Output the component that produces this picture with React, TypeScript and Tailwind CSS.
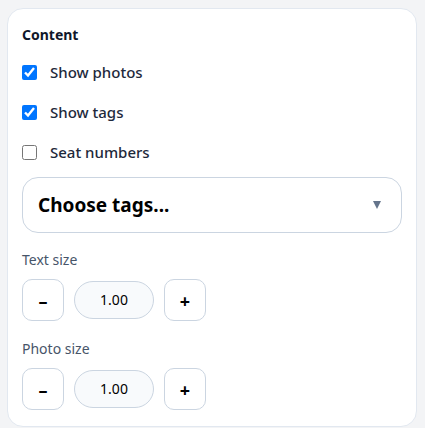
import { useState } from 'react'

const TOGGLES = [
  { id: 'photos', label: 'Show photos', initial: true },
  { id: 'tags', label: 'Show tags', initial: true },
  { id: 'seats', label: 'Seat numbers', initial: false },
] as const

function Stepper({ label, value }: { label: string; value: number }) {
  const [v, setV] = useState(value)
  return (
    <div className="flex flex-col gap-[9px]">
      <span className="text-sm leading-5 text-[#475569]">{label}</span>
      <div className="flex items-center gap-[10px]">
        <button
          type="button"
          onClick={() => setV((x) => Math.max(0.1, +(x - 0.1).toFixed(2)))}
          className="flex h-[42px] w-[42px] items-center justify-center rounded-[10px] border border-[#cbd5e1] bg-white pt-[2px] text-lg font-bold text-black"
        >
          –
        </button>
        <span className="flex h-[38px] w-[80px] items-center justify-center rounded-full border border-[#cbd5e1] bg-[#f8fafc] text-sm text-black">
          {v.toFixed(2)}
        </span>
        <button
          type="button"
          onClick={() => setV((x) => +(x + 0.1).toFixed(2))}
          className="flex h-[42px] w-[42px] items-center justify-center rounded-[10px] border border-[#cbd5e1] bg-white pt-[2px] text-lg font-bold text-black"
        >
          +
        </button>
      </div>
    </div>
  )
}

export default function App() {
  const [checked, setChecked] = useState<Record<string, boolean>>(
    Object.fromEntries(TOGGLES.map((t) => [t.id, t.initial])),
  )

  return (
    <div
      className="min-h-[428px] bg-[#f3f4f6] pt-2 pl-[7px] pr-[8px]"
      style={{ fontFamily: '"Noto Sans", "Open Sans", sans-serif' }}
    >
      <div className="rounded-2xl border border-[#e2e8f0] bg-white px-[14px] pt-4 pb-4">
        <h2 className="text-sm font-bold leading-5 text-[#0f172a]">Content</h2>

        <div className="mt-[15px] flex flex-col gap-4">
          {TOGGLES.map((t) => (
            <label
              key={t.id}
              className="flex h-6 items-center gap-[13px] text-[15px] font-medium text-[#1e293b]"
            >
              <input
                type="checkbox"
                className="m-0 h-[15px] w-[15px]"
                checked={checked[t.id]}
                onChange={(e) => setChecked((c) => ({ ...c, [t.id]: e.target.checked }))}
              />
              {t.label}
            </label>
          ))}
        </div>

        <button
          type="button"
          className="mt-[13px] flex h-[56px] w-full items-center justify-between rounded-2xl border border-[#cbd5e1] bg-white pl-[15px] pr-[20px] text-left"
        >
          <span className="text-[19px] font-bold text-black">Choose tags...</span>
          <svg width="8" height="8" viewBox="0 0 8 8" aria-hidden="true">
            <path d="M0 0h8L4 8z" fill="#64748b" />
          </svg>
        </button>

        <div className="mt-[17px] flex flex-col gap-[18px]">
          <Stepper label="Text size" value={1} />
          <Stepper label="Photo size" value={1} />
        </div>
      </div>
    </div>
  )
}
